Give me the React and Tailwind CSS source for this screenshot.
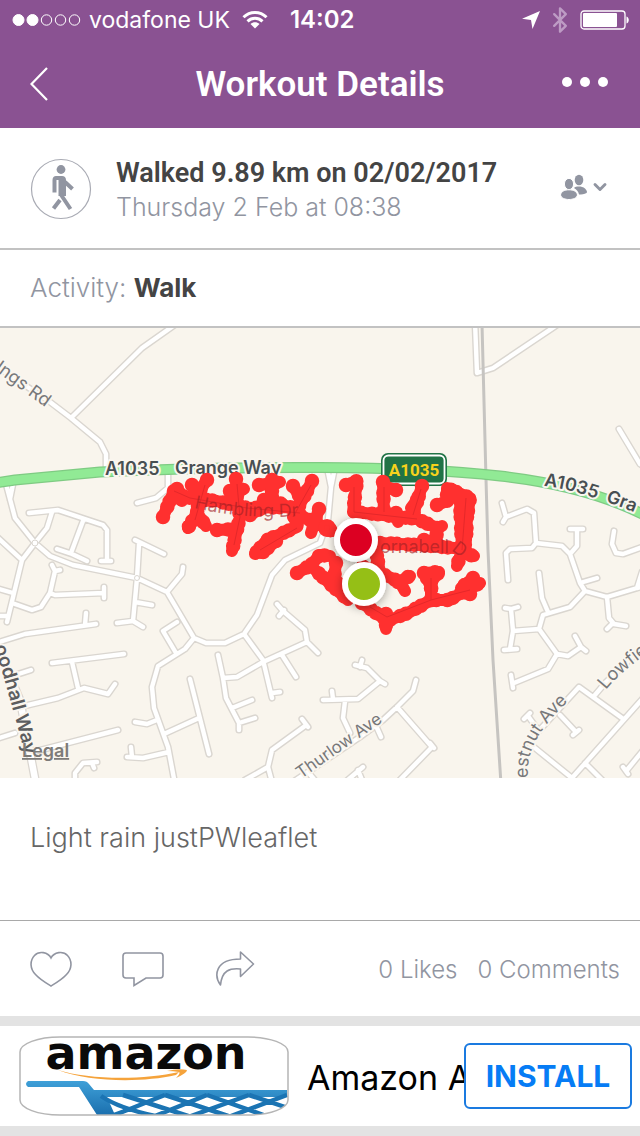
import { Bluetooth, ChevronDown } from 'lucide-react';

const FONT_UI = "font-['Inter','Liberation_Sans',sans-serif]";
const FONT_HEADING = "font-['Roboto','Liberation_Sans',sans-serif]";

// Map is drawn in its own space: 640 wide, y runs from 328 to 778
const ROADS = [
  'M-10 362L50 402L71 418L100 442L106 454V468',
  'M71 418L142 348L176 324',
  'M168 474V488L156 498L137 503',
  'M6 484L15 518L35 543L50 556L73 565L137 578L167 592L194 638L206 643H225L244 634L257 615L272 575L285 560L320 543L328 520L331 487L328 472',
  'M13 484L10 499',
  'M334 472L331 487',
  'M29 513L58 510L85 519L103 525L107 530V560M101 561H111',
  'M52 512L47 528L35 543L22 560L7 622',
  'M83 521L71 553',
  'M-4 536L22 560',
  'M57 549L72 554L87 561',
  'M135 540L164 554',
  'M139 544L137 578L133 621M117 623L133 621L143 627M135 602L152 605',
  'M183 567L182 574L167 592',
  'M52 565L55 571L60 570M55 571L50 593L41 607L32 610L12 603',
  'M50 593L55 595L104 593M104 587V598',
  'M-4 588L13 593M-4 616H7',
  'M-4 643L25 634L96 624M86 613L85 625',
  'M52 663L124 654M72 662L78 688',
  'M6 678L31 670',
  'M20 707L58 698L84 688L108 694L115 684',
  'M-4 739L15 733M33 752L118 730',
  'M97 762L83 763L75 773V784M92 763L94 768',
  'M177 622L163 631L176 653',
  'M194 638L185 649L158 666L152 687L154 708L168 747L175 784',
  'M135 722L147 724L157 720',
  'M164 734L199 718M190 679L209 754',
  'M127 757L143 758L169 752M131 747L132 757',
  'M218 655L223 678L226 698L239 723V730',
  'M223 678L237 677L263 662L307 642L318 653',
  'M232 708L252 700M239 723L255 718',
  'M244 634L263 660L272 698M272 693L280 692',
  'M282 655L296 677',
  'M307 642L305 630L283 611L277 604M279 616L284 610',
  'M245 780L268 767L272 750L305 726M302 719L308 727M268 767L272 782',
  'M323 700L358 699L380 681L367 668L355 665M380 681L385 684M362 660L360 667M332 691L333 699',
  'M345 701L343 718L350 733',
  'M416 680L413 691L397 707L383 720L360 737L290 784',
  'M397 707L432 747L396 784M430 743L434 748M377 728L381 737',
  'M363 767L343 784M358 770L362 780M308 772L318 784',
  'M475 322L477 373L493 368L557 325',
  'M619 429L640 464L650 470',
  'M502 503L506 517L527 509L534 513L536 543L562 546L570 554L580 583L585 591L607 597L637 588L642 572',
  'M503 522L506 517M536 543L532 548L510 549L506 553L508 580',
  'M570 529H583M577 530V546L570 554',
  'M614 531L612 544L616 553L623 554L645 546',
  'M580 583L597 578M637 588L645 586',
  'M585 591L570 607L543 615L539 629L557 654L548 669L514 683M511 675L513 688',
  'M539 573L542 598L548 612',
  'M539 629L513 631L511 609L505 608M511 609L518 607M513 631L510 649M504 650L517 649',
  'M557 654L568 656L581 647L575 636M581 647L586 651',
  'M607 597L609 618L614 624L626 626M613 623L607 629',
  'M530 744L572 778L645 696',
  'M622 718L579 687L535 735',
  'M595 695L606 682L645 645',
  'M560 715L576 732M573 735L579 730M536 727L528 716M524 719L530 713',
  'M585 763L606 784M645 748L627 770M623 767L628 774',
].join('');

const TRACK = [
  'M163 517L174 491L190 498L217 501L247 508L290 507L300 513',
  'M177 489L182 501',
  'M207 480L200 490L197 513L188 528M192 485L200 490M197 513L206 526',
  'M236 479L237 497L240 517L232 551M217 530L238 529M230 491L244 489',
  'M272 480V502M259 485L280 482M264 500L283 504M250 515L262 508',
  'M312 481L305 495L293 517M293 486L302 500M294 508L297 527L267 540L255 554',
  'M276 541L262 553M300 515L332 531M319 509L311 533',
  'M297 573L311 565L320 555L330 556M311 566L328 582L348 600',
  'M336 563L334 579L352 592',
  'M346 485L357 481L353 512L375 514L417 519L437 528L436 545',
  'M383 482L384 512M396 490L383 486M396 513L398 522',
  'M422 486L413 515M417 500L411 508',
  'M437 505L447 501L447 488L470 498L467 517L466 540L463 553L474 556M460 500L462 550L457 566',
  'M380 543L420 545L465 549M437 528L442 526M424 540L427 546',
  'M375 545L380 573L400 582L405 591M398 582L410 576M378 575L362 566',
  'M424 573L439 572L431 582V600M427 578L432 590',
  'M362 603L387 621L408 613L431 600L449 600L467 590L480 583M473 578L461 588M470 594L460 592',
  'M386 614V629',
].join('');

const MAIN_ROAD = 'M-5 483L15 480L100 472Q200 467 320 467.500Q430 468 500 476Q590 486 650 518';
const LANE = 'M20 700L36 784M-2 648L20 700';

function Halo({ children, ...rest }) {
  return (
    <text stroke="#faf6ef" strokeWidth="4" strokeLinejoin="round" paintOrder="stroke" {...rest}>
      {children}
    </text>
  );
}

function StatusBar() {
  return (
    <div className="flex h-10 items-center px-3 text-[23px] leading-10">
      <svg viewBox="0 0 70 14" className="h-[14px] w-[70px]" fill="none" stroke="#fff" aria-hidden="true">
        <circle cx="6.500" cy="7" r="5.500" fill="#fff" />
        <circle cx="20.500" cy="7" r="5.500" fill="#fff" />
        <circle cx="34.500" cy="7" r="5.200" />
        <circle cx="48.500" cy="7" r="5.200" />
        <circle cx="62.500" cy="7" r="5.200" />
      </svg>
      <span className="ml-[7px]">vodafone UK</span>
      <svg viewBox="0 0 26 20" className="ml-3 h-5 w-[26px]" fill="none" stroke="#fff" strokeWidth="3" aria-hidden="true">
        <path d="M1.500 7.200C8 .8 18 .8 24.500 7.200M5.500 11.300C9.800 7.200 16.200 7.200 20.500 11.300" />
        <path d="M13 18.500L8.500 14C11 11.800 15 11.800 17.500 14Z" fill="#fff" stroke="none" />
      </svg>
      <span className="ml-[22px] text-[24px] font-semibold">14:02</span>
      <div className="ml-auto flex items-center">
        <svg viewBox="0 0 18 18" className="h-[18px] w-[18px]" fill="#fff" aria-hidden="true">
          <path d="M18 0L10.500 18L9 9L0 7.800Z" />
        </svg>
        <Bluetooth className="ml-[6px] h-7 w-7 text-[#bd9bc4]" strokeWidth={2} aria-hidden="true" />
        <svg viewBox="0 0 50 20" className="ml-[6px] -mr-[2px] h-5 w-[50px]" aria-hidden="true">
          <rect x="1" y="1" width="44" height="18" rx="3" fill="none" stroke="#fff" strokeWidth="1.300" />
          <rect x="3" y="3" width="34" height="14" rx="1" fill="#fff" />
          <path d="M46.500 6.500C49.500 7.500 49.500 12.500 46.500 13.500Z" fill="#fff" />
        </svg>
      </div>
    </div>
  );
}

function NavBar() {
  return (
    <div className="grid h-[88px] grid-cols-[80px_1fr_80px] items-center">
      <button type="button" aria-label="Back" className="flex pl-[30px]">
        <svg viewBox="0 0 18 34" className="h-[34px] w-[18px]" fill="none" stroke="#fff" strokeWidth="2.200">
          <path d="M17 1L1.500 17L17 33" />
        </svg>
      </button>
      <h1 className={`${FONT_HEADING} pt-[2px] text-center text-[35px] leading-[48px] font-semibold`}>Workout Details</h1>
      <button type="button" aria-label="More" className="-mt-1 flex justify-end gap-2 pr-8">
        <span className="size-[10px] rounded-full bg-white" />
        <span className="size-[10px] rounded-full bg-white" />
        <span className="size-[10px] rounded-full bg-white" />
      </button>
    </div>
  );
}

function WorkoutSummary() {
  return (
    <section className="flex items-center border-b-2 border-[#c2c2c2] px-[30px] pt-[27px] pb-[25px]">
      <svg viewBox="0 0 62 62" className="h-[62px] w-[62px] shrink-0" aria-hidden="true">
        <circle cx="31" cy="31" r="29.500" fill="none" stroke="#a9abb4" strokeWidth="1.200" />
        <g fill="#9195a1">
          <circle cx="31" cy="11.500" r="4.400" />
          <path d="M26 18H32C34.500 18 36 19.500 36 22V38H28.500V22H26.500V34.500H22.500V22C22.500 19.500 24 18 26 18Z" />
        </g>
        <path d="M35 24L42.500 31M30.500 36L40.500 51M30 42L23.500 50.500" stroke="#9195a1" strokeWidth="4" fill="none" />
      </svg>
      <div className="ml-6 min-w-0 flex-1">
        <h2 className={`${FONT_HEADING} text-[27px] leading-9 font-semibold whitespace-nowrap text-[#444]`}>
          Walked 9.89 km on 02/02/2017
        </h2>
        <p className="text-[25px] leading-8 font-[350] text-[#9195a1]">Thursday 2 Feb at 08:38</p>
      </div>
      <button type="button" aria-label="Sharing options" className="flex items-center gap-[2px] pb-1 text-[#9195a1]">
        <svg viewBox="0 0 28 26" className="h-[26px] w-7" fill="currentColor">
          <ellipse cx="19" cy="6" rx="4.300" ry="5.200" />
          <path d="M14 14C16 12 22 12 25 14.500C27 16.500 27.500 18.500 26.500 19C24.500 20 21.500 20.500 19 20.500C18.500 17.500 16.500 15.500 14 14Z" />
          <ellipse cx="9" cy="10" rx="4.600" ry="5.600" stroke="#fff" />
          <path d="M.500 21C1 17.500 4.500 15.800 9 15.800S17 17.500 17.500 21C17 24 13 25.500 9 25.500S1 24 .500 21Z" stroke="#fff" />
        </svg>
        <ChevronDown className="h-5 w-5" strokeWidth={3.500} />
      </button>
    </section>
  );
}

function RouteMap() {
  return (
    <svg viewBox="0 328 640 450" className={`${FONT_UI} block w-full bg-[#f9f5ed]`} role="img" aria-label="Route map">
      <defs>
        <path id="grange" d="M544 486Q590 491 680 532" />
        <path id="chestnut" d="M528 778C526 750 538 725 590 682" />
        <path id="lowfield" d="M606 690Q625 665 690 625" />
        <path id="woodhall" d="M-6 647Q6 680 30 775" />
        <path id="hambling" d="M194 508Q250 521 310 515" />
        <filter id="shadow" x="-50%" y="-50%" width="200%" height="200%">
          <feDropShadow dx="0" dy="2" stdDeviation="5" floodOpacity="0.350" />
        </filter>
      </defs>

      <g fill="none" strokeLinecap="round" strokeLinejoin="round">
        <path d={ROADS} stroke="#dad6d0" strokeWidth="7.200" />
        <path d={ROADS} stroke="#fff" strokeWidth="4.400" />
        <path d={LANE} stroke="#dad6d0" strokeWidth="9" />
        <path d={LANE} stroke="#fff" strokeWidth="6.500" />
        <circle cx="35" cy="543" r="3" fill="#fff" stroke="#dad6d0" />
        <circle cx="137" cy="578" r="2.500" fill="#fff" stroke="#dad6d0" />
        <path d="M482 324L486 479L488 550L493 660L501 784" stroke="#c6c4c1" strokeWidth="3" />
        <path d={MAIN_ROAD} stroke="#7fcb83" strokeWidth="11" />
        <path d={MAIN_ROAD} stroke="#91ea95" strokeWidth="8.500" />
      </g>

      <g fontSize="18" fontWeight="600" fill="#484f52">
        <Halo x="105" y="475">A1035</Halo>
        <Halo x="175" y="474">Grange Way</Halo>
        <Halo><textPath href="#grange">A1035 &#160;Gra</textPath></Halo>
      </g>
      <g fontSize="18" fill="#77787a">
        <Halo transform="translate(-6 370) rotate(36)">Ings Rd</Halo>
        <Halo><textPath href="#chestnut">estnut Ave</textPath></Halo>
        <Halo><textPath href="#lowfield">Lowfie</textPath></Halo>
        <Halo fontSize="17" transform="translate(301 779) rotate(-35)">Thurlow Ave</Halo>
      </g>
      <Halo fontSize="19" fontWeight="600" fill="#5c5d5f">
        <textPath href="#woodhall">oodhall Way</textPath>
      </Halo>

      <rect x="381" y="453" width="66" height="33" rx="7" fill="#217346" />
      <rect x="383.500" y="455.500" width="61" height="28" rx="5" fill="none" stroke="#fff" strokeWidth="1.800" />
      <text x="414" y="476" textAnchor="middle" fontSize="17" fontWeight="700" fill="#f6d21c" className={FONT_HEADING}>A1035</text>

      {/* recorded track: a solid line, plus beads for its rough edge */}
      <g fill="none" stroke="#ff302f" strokeLinecap="round" strokeLinejoin="round">
        <path d={TRACK} strokeWidth="12" />
        <path d={TRACK} strokeWidth="14.500" strokeDasharray="0 11 0 6" />
        <circle cx="327" cy="528" r="6" strokeWidth="6" />
      </g>
      <path d="M174 491L190 498L247 508L300 513M205 485L195 520M237 484L240 517L234 545M311 485L293 517M297 528L260 550M354 487V512L417 519M384 487V512M421 489L413 515M466 498L462 550M431 600V578M370 607L387 617L431 600L470 590" fill="none" stroke="#e5282a" strokeWidth="1" />
      <g fontSize="18" fill="#a02024" fillOpacity="0.650">
        <text><textPath href="#hambling">Hambling Dr</textPath></text>
        <text x="380" y="553">ornabell</text>
        <text transform="translate(451 550) rotate(38)">D</text>
      </g>

      <g stroke="#fff" strokeWidth="6">
        <circle cx="356" cy="540" r="19" fill="#dc0021" filter="url(#shadow)" />
        <circle cx="364" cy="584" r="19" fill="#95bf12" filter="url(#shadow)" />
      </g>
      <text x="22" y="757" fontSize="18" fontWeight="600" fill="#7d7b78" textDecoration="underline">Legal</text>
    </svg>
  );
}

function ActionBar() {
  return (
    <section className="flex h-24 items-center border-t border-[#a9a9a9] px-[30px] text-[#9195a1]">
      <div className="flex gap-[50px]">
        <button type="button" aria-label="Like">
          <svg viewBox="0 0 42 36" className="h-9 w-[42px]" fill="none" stroke="currentColor" strokeWidth="1.600">
            <path d="M21 7C24 1 33-.5 37.500 4.500C42.500 10 42 18 36.500 23.500C32 28.500 26 32 21 35C16 32 10 28.500 5.500 23.500C0 18-.5 10 4.500 4.500C9-.5 18 1 21 7Z" />
          </svg>
        </button>
        <button type="button" aria-label="Comment">
          <svg viewBox="0 0 42 36" className="h-9 w-[42px]" fill="none" stroke="currentColor" strokeWidth="1.600">
            <path d="M4 2H38Q41 2 41 5V24Q41 27 38 27H24L12 34.500V27H4Q1 27 1 24V5Q1 2 4 2Z" />
          </svg>
        </button>
        <button type="button" aria-label="Share">
          <svg viewBox="0 0 42 36" className="h-9 w-[42px]" fill="none" stroke="currentColor" strokeWidth="1.600" strokeLinejoin="round">
            <path d="M26.500 1L39.500 13L26.500 25.500V18C16 17 8 19 6.500 34C0 25 .5 8 26.500 8Z" />
          </svg>
        </button>
      </div>
      <p className="-mr-[10px] ml-auto flex gap-5 pt-[2px] text-[24px] leading-8 font-[350] whitespace-nowrap">
        <span>0 Likes</span>
        <span>0 Comments</span>
      </p>
    </section>
  );
}

function AmazonLogo() {
  return (
    <svg viewBox="0 0 270 80" className="h-20 w-[270px] shrink-0" role="img" aria-label="Amazon">
      <defs>
        <clipPath id="card"><rect x="1" y="1" width="268" height="78" rx="40" ry="15" /></clipPath>
        <linearGradient id="cart" x1="0" y1="0" x2="0" y2="1">
          <stop offset="0" stopColor="#3fa0d8" />
          <stop offset="1" stopColor="#1a6fae" />
        </linearGradient>
      </defs>
      <g clipPath="url(#card)">
        <rect width="270" height="80" fill="#fff" />
        <text x="127" y="33" textAnchor="middle" fontSize="46" fontWeight="700" fill="#0a0a0a" className="font-['DejaVu_Sans',sans-serif]">amazon</text>
        <path d="M39 34C70 44 125 44 160 36L157 39C122 47 70 46 39 34Z" fill="#f5a33b" />
        <path d="M148 35Q160 32 168 34Q168 37 157 42Q162 37 160 36Q154 35 148 35Z" fill="#f5a33b" />
        <path d="M9 45H64Q68 45 70 48L75 54H268V61H88L96 79H78L60 51H9Q5 48 9 45Z" fill="url(#cart)" />
        <path d="M82 60C96 70 118 76 136 80M104 59L172 81M146 59L212 81M188 59L250 81M230 59L275 74M92 80C110 74 125 67 146 59M136 80L188 59M172 80L230 59M212 80L268 59M250 80L275 70" fill="none" stroke="#1b74b3" strokeWidth="4.500" />
      </g>
      <rect x="1" y="1" width="268" height="78" rx="40" ry="15" fill="none" stroke="#b5b5b5" strokeWidth="1.500" />
    </svg>
  );
}

function AdBanner() {
  return (
    <aside className="flex h-[120px] items-center border-y-[10px] border-[#e3e3e3] bg-white pr-2 pl-[19px]">
      <AmazonLogo />
      <p className="ml-[18px] min-w-0 flex-1 overflow-hidden pt-1 text-[34px] leading-[44px] whitespace-nowrap text-black">Amazon A</p>
      <button
        type="button"
        className="h-[66px] w-[168px] shrink-0 rounded-md border-2 border-[#1a7ae0] bg-white text-[30px] font-bold text-[#067cf5]"
      >
        INSTALL
      </button>
    </aside>
  );
}

export default function App() {
  return (
    <main className={`${FONT_UI} bg-white`}>
      <header className="bg-[#8a5292] text-white">
        <StatusBar />
        <NavBar />
      </header>
      <WorkoutSummary />
      <p className="border-b-2 border-[#c2c2c2] px-[30px] pt-5 pb-5 text-[26px] leading-9 font-[350] text-[#9195a1]">
        Activity: <strong className="font-bold text-[#444]">Walk</strong>
      </p>
      <RouteMap />
      <p className="px-[30px] pt-[42px] pb-16 text-[27px] leading-9 font-[350] text-[#666]">Light rain justPWleaflet</p>
      <ActionBar />
      <AdBanner />
    </main>
  );
}
